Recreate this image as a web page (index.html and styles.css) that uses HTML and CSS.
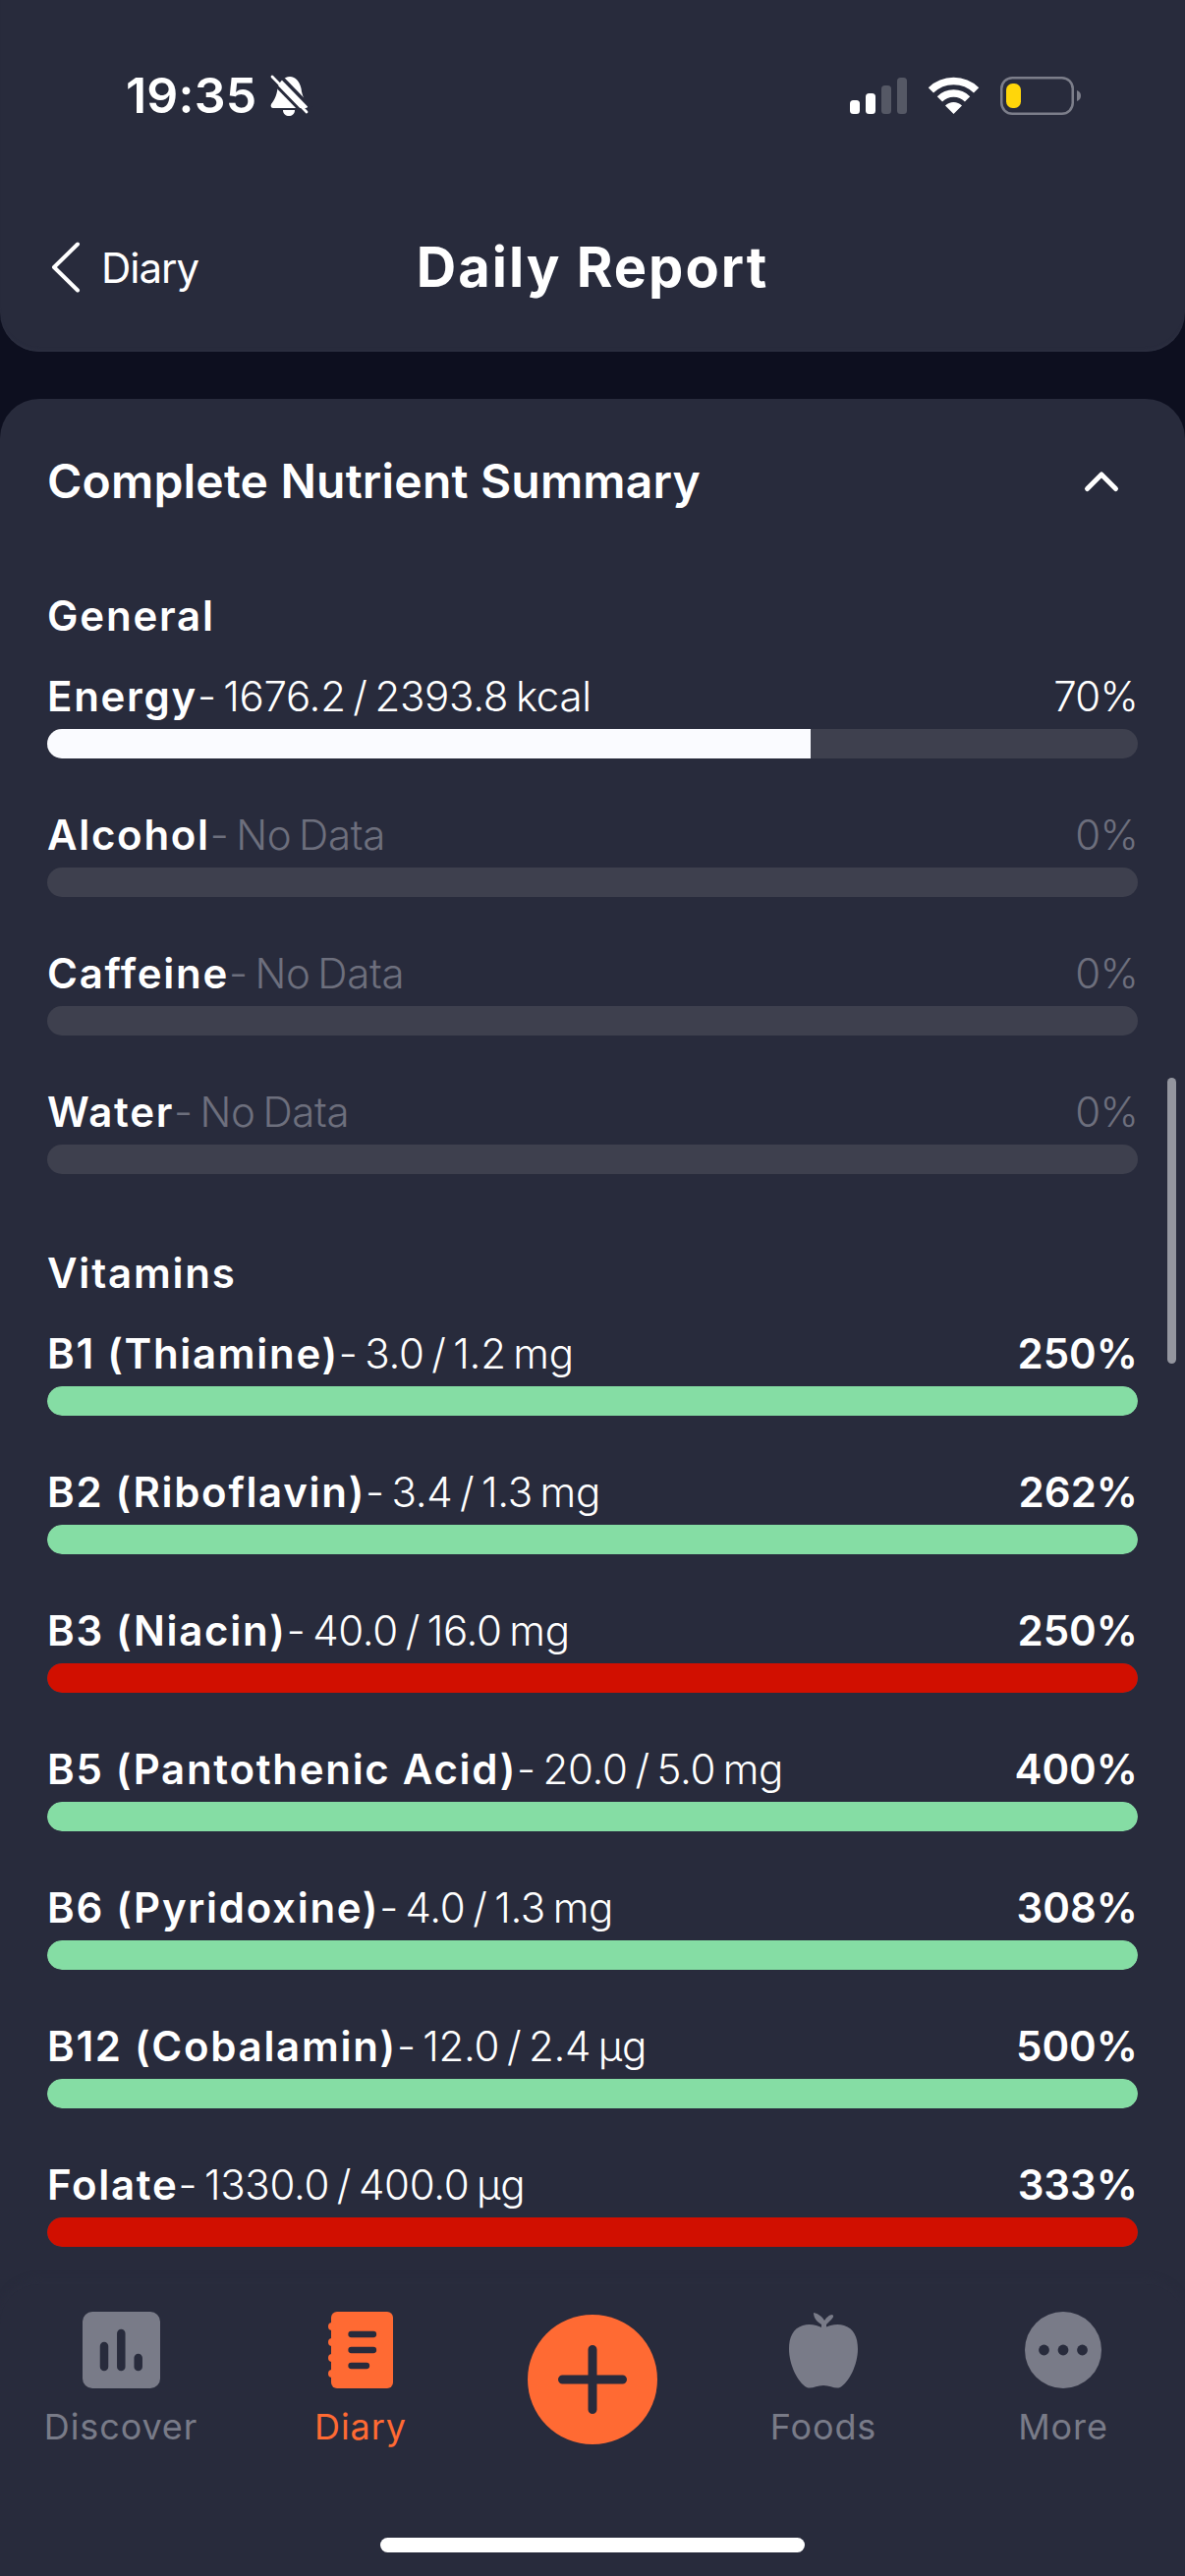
FILE: index.html
```html
<!DOCTYPE html>
<html lang="en">
<head>
<meta charset="utf-8">
<title>Daily Report</title>
<link rel="stylesheet" href="styles.css">
</head>
<body>
<div class="screen">
  <header class="top">
    <div class="status">
      <span class="time">19:35</span>
      <svg class="bell" viewBox="0 0 38 41"><path fill="#fff" d="M20 1C26 1 30 6 31.500 13C32.500 21 35 25 38 29C39 31 38 33 36 33H3C1 33 0 31 1 29C4 25 6.500 21 7.500 13C9 6 14 1 20 1Z"/><path fill="#fff" d="M13 35H25C25 39 22 41 19 41C16 41 13 39 13 35Z"/><path stroke="#282b3c" stroke-width="3.500" d="M7 -3L42 33"/><path stroke="#282b3c" stroke-width="3" d="M0 4L34 39"/><path stroke="#fff" stroke-width="2.800" stroke-linecap="round" d="M2 1L37 37"/></svg>
      <span class="status-right">
        <svg class="signal" viewBox="0 0 58 37"><rect x="0" y="23" width="10" height="14" rx="3.500" fill="#fff"/><rect x="16" y="16" width="10" height="21" rx="3.500" fill="#fff"/><rect x="32" y="8" width="10" height="29" rx="3.500" fill="#555865"/><rect x="48" y="0" width="10" height="37" rx="3.500" fill="#555865"/></svg>
        <svg class="wifi" viewBox="0 0 51 37"><g fill="none" stroke="#fff" stroke-width="7.500"><path d="M2.400 12.900A33 33 0 0 1 48.600 12.900"/><path d="M11.400 21.900A20 20 0 0 1 39.600 21.900"/></g><path fill="#fff" d="M25.500 37L17 28.500A12 12 0 0 1 34 28.500Z"/></svg>
        <svg class="battery" viewBox="0 0 82 39"><rect x="1.250" y="1.250" width="72.500" height="36.500" rx="11" fill="none" stroke="#7c7e8a" stroke-width="2.500"/><rect x="6" y="7" width="15" height="25" rx="6.500" fill="#ffd60a"/><path d="M78 14C81 15 82 17 82 19.500C82 22 81 24 78 25Z" fill="#7c7e8a"/></svg>
      </span>
    </div>
    <nav class="navbar">
      <span class="back">
        <svg class="back-icon" viewBox="0 0 30 52"><path d="M27 2.500L3 26L27 49.500" fill="none" stroke="#fff" stroke-width="4" stroke-linecap="round" stroke-linejoin="round"/></svg>
        <span class="back-text">Diary</span>
      </span>
      <h1 class="title">Daily Report</h1>
    </nav>
  </header>

  <main class="card">
    <div class="card-head">
      <h2 class="card-title">Complete Nutrient Summary</h2>
      <svg class="chevron" viewBox="0 0 34 20"><path d="M2.500 17.500L17 3L31.500 17.500" fill="none" stroke="#fff" stroke-width="5" stroke-linecap="round" stroke-linejoin="round"/></svg>
    </div>

    <section class="group">
      <h3 class="group-title">General</h3>
      <div class="nutrient">
        <div class="label"><span class="name">Energy</span><span class="val">- 1676.2 / 2393.8 kcal</span><span class="pct">70%</span></div>
        <div class="track"><div class="fill white" style="width:70%"></div></div>
      </div>
      <div class="nutrient nodata">
        <div class="label"><span class="name">Alcohol</span><span class="val">- No Data</span><span class="pct">0%</span></div>
        <div class="track"></div>
      </div>
      <div class="nutrient nodata">
        <div class="label"><span class="name">Caffeine</span><span class="val">- No Data</span><span class="pct">0%</span></div>
        <div class="track"></div>
      </div>
      <div class="nutrient nodata">
        <div class="label"><span class="name">Water</span><span class="val">- No Data</span><span class="pct">0%</span></div>
        <div class="track"></div>
      </div>
    </section>

    <section class="group">
      <h3 class="group-title">Vitamins</h3>
      <div class="nutrient strong">
        <div class="label"><span class="name">B1 (Thiamine)</span><span class="val">- 3.0 / 1.2 mg</span><span class="pct">250%</span></div>
        <div class="track"><div class="fill green" style="width:100%"></div></div>
      </div>
      <div class="nutrient strong">
        <div class="label"><span class="name">B2 (Riboflavin)</span><span class="val">- 3.4 / 1.3 mg</span><span class="pct">262%</span></div>
        <div class="track"><div class="fill green" style="width:100%"></div></div>
      </div>
      <div class="nutrient strong">
        <div class="label"><span class="name">B3 (Niacin)</span><span class="val">- 40.0 / 16.0 mg</span><span class="pct">250%</span></div>
        <div class="track"><div class="fill red" style="width:100%"></div></div>
      </div>
      <div class="nutrient strong">
        <div class="label"><span class="name">B5 (Pantothenic Acid)</span><span class="val">- 20.0 / 5.0 mg</span><span class="pct">400%</span></div>
        <div class="track"><div class="fill green" style="width:100%"></div></div>
      </div>
      <div class="nutrient strong">
        <div class="label"><span class="name">B6 (Pyridoxine)</span><span class="val">- 4.0 / 1.3 mg</span><span class="pct">308%</span></div>
        <div class="track"><div class="fill green" style="width:100%"></div></div>
      </div>
      <div class="nutrient strong">
        <div class="label"><span class="name">B12 (Cobalamin)</span><span class="val">- 12.0 / 2.4 µg</span><span class="pct">500%</span></div>
        <div class="track"><div class="fill green" style="width:100%"></div></div>
      </div>
      <div class="nutrient strong">
        <div class="label"><span class="name">Folate</span><span class="val">- 1330.0 / 400.0 µg</span><span class="pct">333%</span></div>
        <div class="track"><div class="fill red" style="width:100%"></div></div>
      </div>
    </section>
  </main>

  <div class="scrollbar"></div>

  <footer class="tabbar">
    <div class="tabs">
      <div class="tab">
        <svg class="tab-icon" viewBox="0 0 79 78"><rect width="79" height="78" rx="10" fill="#797b88"/><g stroke="#282b3c" stroke-width="8.500" stroke-linecap="round"><path d="M22 35V56"/><path d="M39.300 22V56"/><path d="M56.700 47V56"/></g></svg>
        <span class="tab-label">Discover</span>
      </div>
      <div class="tab active">
        <svg class="tab-icon" viewBox="0 0 66 78"><rect x="3" width="63" height="78" rx="6" fill="#ff6a33"/><g fill="#ff6a33"><circle cx="4" cy="15" r="4"/><circle cx="4" cy="31" r="4"/><circle cx="4" cy="47" r="4"/><circle cx="4" cy="63" r="4"/></g><g stroke="#282b3c" stroke-width="6.300" stroke-linecap="round"><path d="M23.500 23H46"/><path d="M23.500 39H46"/><path d="M23.500 55H39"/></g></svg>
        <span class="tab-label">Diary</span>
      </div>
      <div class="tab add-tab">
        <span class="add">
          <svg class="add-icon" viewBox="0 0 70 70"><path d="M35 4.500V65.500M4.500 35H65.500" fill="none" stroke="#282b3c" stroke-width="9" stroke-linecap="round"/></svg>
        </span>
      </div>
      <div class="tab">
        <svg class="tab-icon" viewBox="0 0 70 78"><path fill="#797b88" d="M35 17C28 13 20 12 14 14C4 17 0 26 0 38C0 54 9 72 18 77C23 79 28 75 35 75C42 75 47 79 52 77C61 72 70 54 70 38C70 26 66 17 56 14C50 12 42 13 35 17Z"/><path fill="#797b88" d="M33 18V13C28 10 25 6 25 1C30 2 34 5 36 9C38 6 41 3 44 3C46 4 45 6 43 8L38 13V18Z"/></svg>
        <span class="tab-label">Foods</span>
      </div>
      <div class="tab">
        <svg class="tab-icon" viewBox="0 0 78 78"><circle cx="39" cy="39" r="39" fill="#797b88"/><g fill="#282b3c"><circle cx="19.500" cy="39" r="5.400"/><circle cx="39" cy="39" r="5.400"/><circle cx="58.500" cy="39" r="5.400"/></g></svg>
        <span class="tab-label">More</span>
      </div>
    </div>
    <div class="home-indicator"></div>
  </footer>
</div>
</body>
</html>
```

FILE: styles.css
```css
* { box-sizing: border-box; margin: 0; padding: 0; }
html, body { width: 1206px; height: 2622px; overflow: hidden; background: #0d0f1f; }
body { font-family: Inter, "Noto Sans", "Liberation Sans", sans-serif; color: #fff; }
svg { display: block; flex: none; overflow: visible; }

.screen { position: relative; width: 1206px; height: 2622px; overflow: hidden; }

/* header */
.top {
  height: 358px;
  background: #282b3c;
  border-radius: 0 0 40px 40px;
  box-shadow: inset 0 -4px 3px -2px #2c2f40;
  padding-top: 75px;
}
.status { display: flex; align-items: center; height: 44px; padding: 0 106px 0 128px; }
.time { font-size: 50px; font-weight: 600; line-height: 44px; letter-spacing: 0.2px; }
.bell { width: 38px; height: 41px; margin-left: 14px; }
.status-right { display: flex; align-items: center; margin-left: auto; }
.signal { width: 58px; height: 37px; }
.wifi { width: 51px; height: 37px; margin-left: 22px; }
.battery { width: 82px; height: 39px; margin-left: 22px; }

.navbar { position: relative; display: flex; align-items: center; justify-content: center; height: 60px; margin-top: 123px; }
.back { position: absolute; left: 52px; top: 0; display: flex; align-items: center; height: 60px; }
.back-icon { width: 30px; height: 52px; }
.back-text { font-size: 42px; font-weight: 400; margin-left: 21px; letter-spacing: -1px; }
.title { font-size: 56px; font-weight: 700; line-height: 60px; letter-spacing: 2px; }

/* card */
.card {
  margin-top: 48px;
  height: 2300px;
  background: #282b3c;
  border-radius: 40px 40px 0 0;
  padding: 54px 48px 0;
}
.card-head { display: flex; align-items: center; justify-content: space-between; height: 60px; padding-right: 20px; }
.card-title { font-size: 48px; font-weight: 600; line-height: 60px; letter-spacing: 0.2px; }
.chevron { width: 34px; height: 20px; }

.group { margin-top: 83px; }
.group + .group { margin-top: 77px; }
.group-title { font-size: 42px; font-weight: 600; line-height: 48px; letter-spacing: 1.8px; margin-bottom: 34px; }

.nutrient { margin-bottom: 54px; }
.nutrient:last-child { margin-bottom: 0; }
.label { display: flex; align-items: baseline; height: 48px; font-size: 42px; line-height: 48px; margin-bottom: 9px; }
.name { font-weight: 600; letter-spacing: 1.7px; }
.val { font-weight: 300; margin-left: 0; letter-spacing: -0.3px; word-spacing: -3.8px; }
.pct { font-weight: 300; margin-left: auto; letter-spacing: -0.8px; }
.strong .pct { font-weight: 600; letter-spacing: 0; }
.nodata .val, .nodata .pct { color: #6d6f7d; }

.track { height: 30px; border-radius: 15px; background: #3e404e; overflow: hidden; }
.fill { height: 30px; }
.white { background: #fafbff; }
.green { background: #85dda4; border-radius: 15px; }
.red { background: #d10f00; border-radius: 15px; }

.scrollbar {
  position: absolute;
  left: 1188px;
  top: 1097px;
  width: 9px;
  height: 291px;
  border-radius: 5px;
  background: #94969f;
}

/* tab bar */
.tabbar {
  position: absolute;
  left: 0;
  right: 0;
  bottom: 0;
  height: 297px;
  background: #282b3c;
  border-radius: 40px 40px 0 0;
  box-shadow: 0 -6px 8px -2px #2a2d3e;
  padding-top: 28px;
}
.tabs { display: grid; grid-template-columns: 246px 242px 230px 240px 248px; height: 140px; }
.tab { display: flex; flex-direction: column; align-items: center; color: #797b88; }
.tab-icon { height: 78px; width: auto; }
.tab-label { font-size: 36px; font-weight: 400; line-height: 44px; margin-top: 17px; letter-spacing: 0.9px; }
.active { color: #ff6a33; }
.add-tab { padding-top: 3px; }
.add { display: flex; align-items: center; justify-content: center; width: 132px; height: 132px; border-radius: 50%; background: #ff6a33; }
.add-icon { width: 70px; height: 70px; }
.home-indicator { width: 432px; height: 15px; border-radius: 8px; background: #fff; margin: 90px auto 0; }
```
